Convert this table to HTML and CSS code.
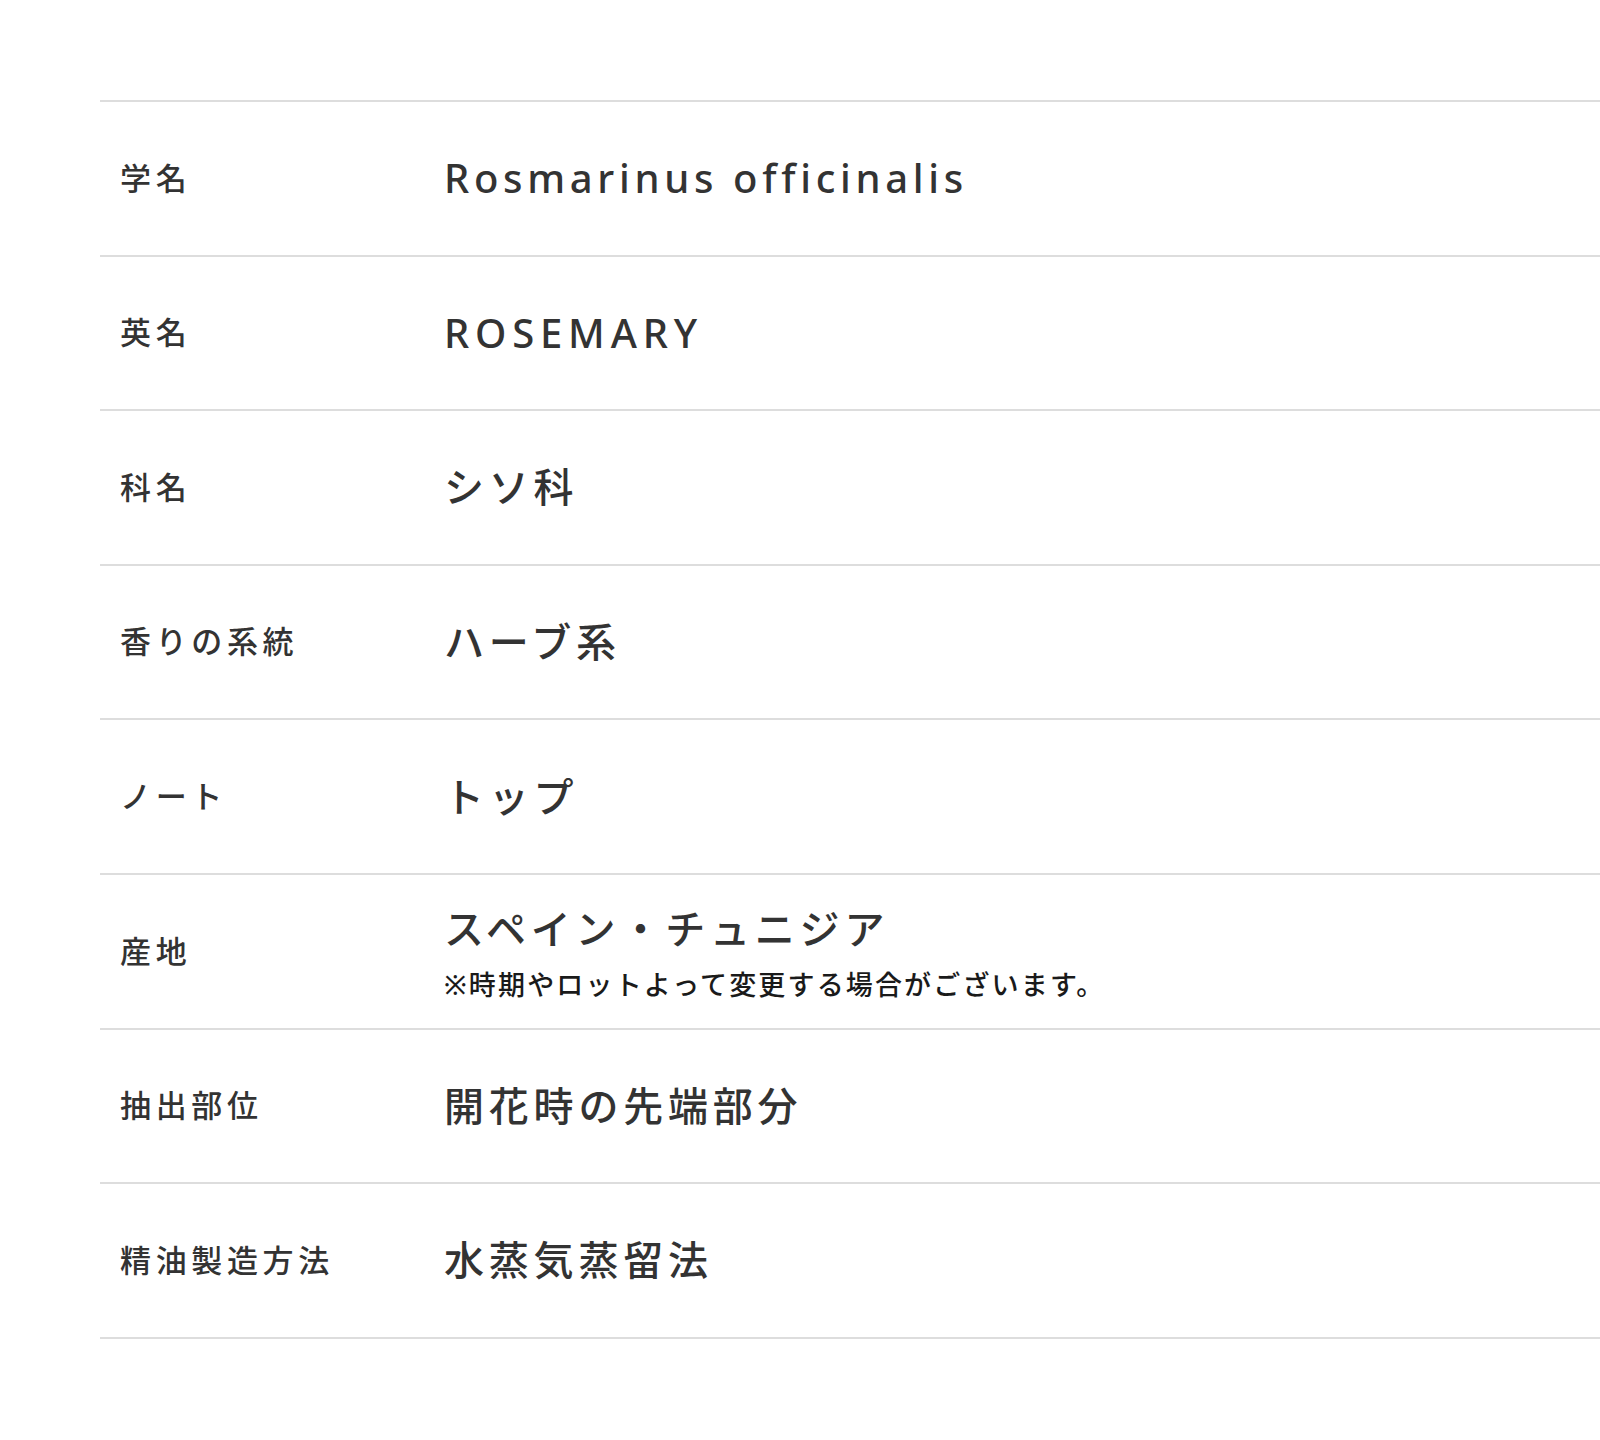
FILE: index.html
```html
<!DOCTYPE html>
<html lang="ja">
<head>
<meta charset="utf-8">
<title>Rosemary</title>
<link rel="stylesheet" href="styles.css">
</head>
<body>
<main class="page">
  <dl class="spec">
    <div class="row">
      <dt class="label">学名</dt>
      <dd class="value value--latin">Rosmarinus officinalis</dd>
    </div>
    <div class="row">
      <dt class="label">英名</dt>
      <dd class="value value--latin value--caps">ROSEMARY</dd>
    </div>
    <div class="row">
      <dt class="label">科名</dt>
      <dd class="value">シソ科</dd>
    </div>
    <div class="row">
      <dt class="label">香りの系統</dt>
      <dd class="value">ハーブ系</dd>
    </div>
    <div class="row">
      <dt class="label">ノート</dt>
      <dd class="value">トップ</dd>
    </div>
    <div class="row">
      <dt class="label">産地</dt>
      <dd class="value">スペイン・チュニジア<span class="note">※時期やロットよって変更する場合がございます。</span></dd>
    </div>
    <div class="row">
      <dt class="label">抽出部位</dt>
      <dd class="value">開花時の先端部分</dd>
    </div>
    <div class="row">
      <dt class="label">精油製造方法</dt>
      <dd class="value">水蒸気蒸留法</dd>
    </div>
  </dl>
</main>
</body>
</html>
```
FILE: styles.css
```css
html, body {
  margin: 0;
  padding: 0;
  background: #ffffff;
}

body {
  font-family: "Noto Sans", "Noto Sans CJK JP", sans-serif;
  color: #333333;
  width: 1600px;
  height: 1440px;
  overflow: hidden;
}

.page {
  padding: 100px 0 0 100px;
}

.spec {
  margin: 0;
  border-top: 2px solid #dddddd;
}

.row {
  display: grid;
  grid-template-columns: 344px 1fr;
  align-items: center;
  min-height: 152.6px;
  border-bottom: 2px solid #dddddd;
}

.label {
  margin: 0;
  padding-left: 20px;
  font-size: 31px;
  font-weight: 500;
  letter-spacing: 0.15em;
  line-height: 1.4;
}

.value {
  margin: 0;
  font-size: 40px;
  font-weight: 500;
  letter-spacing: 0.12em;
  line-height: 56px;
}

.value--latin {
  letter-spacing: 0.117em;
}

.value--caps {
  letter-spacing: 0.145em;
}

.note {
  display: block;
  margin-top: 12px;
  font-size: 27px;
  font-weight: 500;
  letter-spacing: 0.08em;
  line-height: 32px;
  color: #1a1a1a;
}
```
